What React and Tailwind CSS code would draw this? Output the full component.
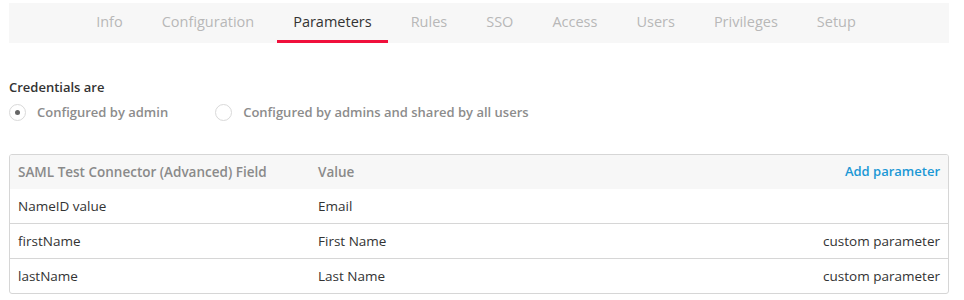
import React from 'react';

const tabs = ['Info', 'Configuration', 'Parameters', 'Rules', 'SSO', 'Access', 'Users', 'Privileges', 'Setup'];

const rows = [
  { field: 'NameID value', value: 'Email', note: '' },
  { field: 'firstName', value: 'First Name', note: 'custom parameter' },
  { field: 'lastName', value: 'Last Name', note: 'custom parameter' },
];

const Radio = ({ checked, label }) => (
  <label className="flex items-center gap-[11px]">
    <span className="flex h-[17px] w-[17px] items-center justify-center rounded-full border border-[#d9d9d9] bg-white">
      {checked && <span className="h-[5px] w-[5px] rounded-full bg-[#666]" />}
    </span>
    <span className="text-[13px] font-semibold text-[#8c8c8c]">{label}</span>
  </label>
);

const App = () => {
  return (
    <div className="h-[300px] w-[964px] bg-white px-[9px] pt-[3px] font-['Open_Sans',sans-serif]">
      <div className="flex h-[40px] w-[940px] justify-center bg-[#f7f7f7] pr-[6px]">
        <div className="flex gap-[7px]">
          {tabs.map((t) => (
            <div
              key={t}
              className={
                t === 'Parameters'
                  ? 'flex items-center border-b-[3px] border-[#f0103c] px-4 text-[14.5px] text-[#333]'
                  : 'flex items-center border-b-[3px] border-transparent px-4 text-[14.5px] text-[#b8b8b8]'
              }
            >
              {t}
            </div>
          ))}
        </div>
      </div>

      <div className="mt-[35px] text-[13px] font-semibold text-[#333]">Credentials are</div>
      <div className="mt-[5px] flex gap-[47px]">
        <Radio checked label="Configured by admin" />
        <Radio label="Configured by admins and shared by all users" />
      </div>

      <div className="mt-[32px] w-[940px] overflow-hidden rounded-[3px] border border-[#d6d6d6] text-[13.5px]">
        <div className="flex h-[34px] items-center bg-[#f7f7f7] px-[8px] font-semibold">
          <div className="w-[300px] text-[#8a8a8a]">SAML Test Connector (Advanced) Field</div>
          <div className="flex-1 text-[#8a8a8a]">Value</div>
          <div className="text-[13px] text-[#1b98d5]">Add parameter</div>
        </div>
        {rows.map((r, i) => (
          <div
            key={r.field}
            className={
              i === 0
                ? 'flex h-[34px] items-center px-[8px] text-[#333]'
                : 'flex h-[35px] items-center border-t border-[#d6d6d6] px-[8px] text-[#333]'
            }
          >
            <div className="w-[300px]">{r.field}</div>
            <div className="flex-1">{r.value}</div>
            <div>{r.note}</div>
          </div>
        ))}
      </div>
    </div>
  );
};

export default App;
